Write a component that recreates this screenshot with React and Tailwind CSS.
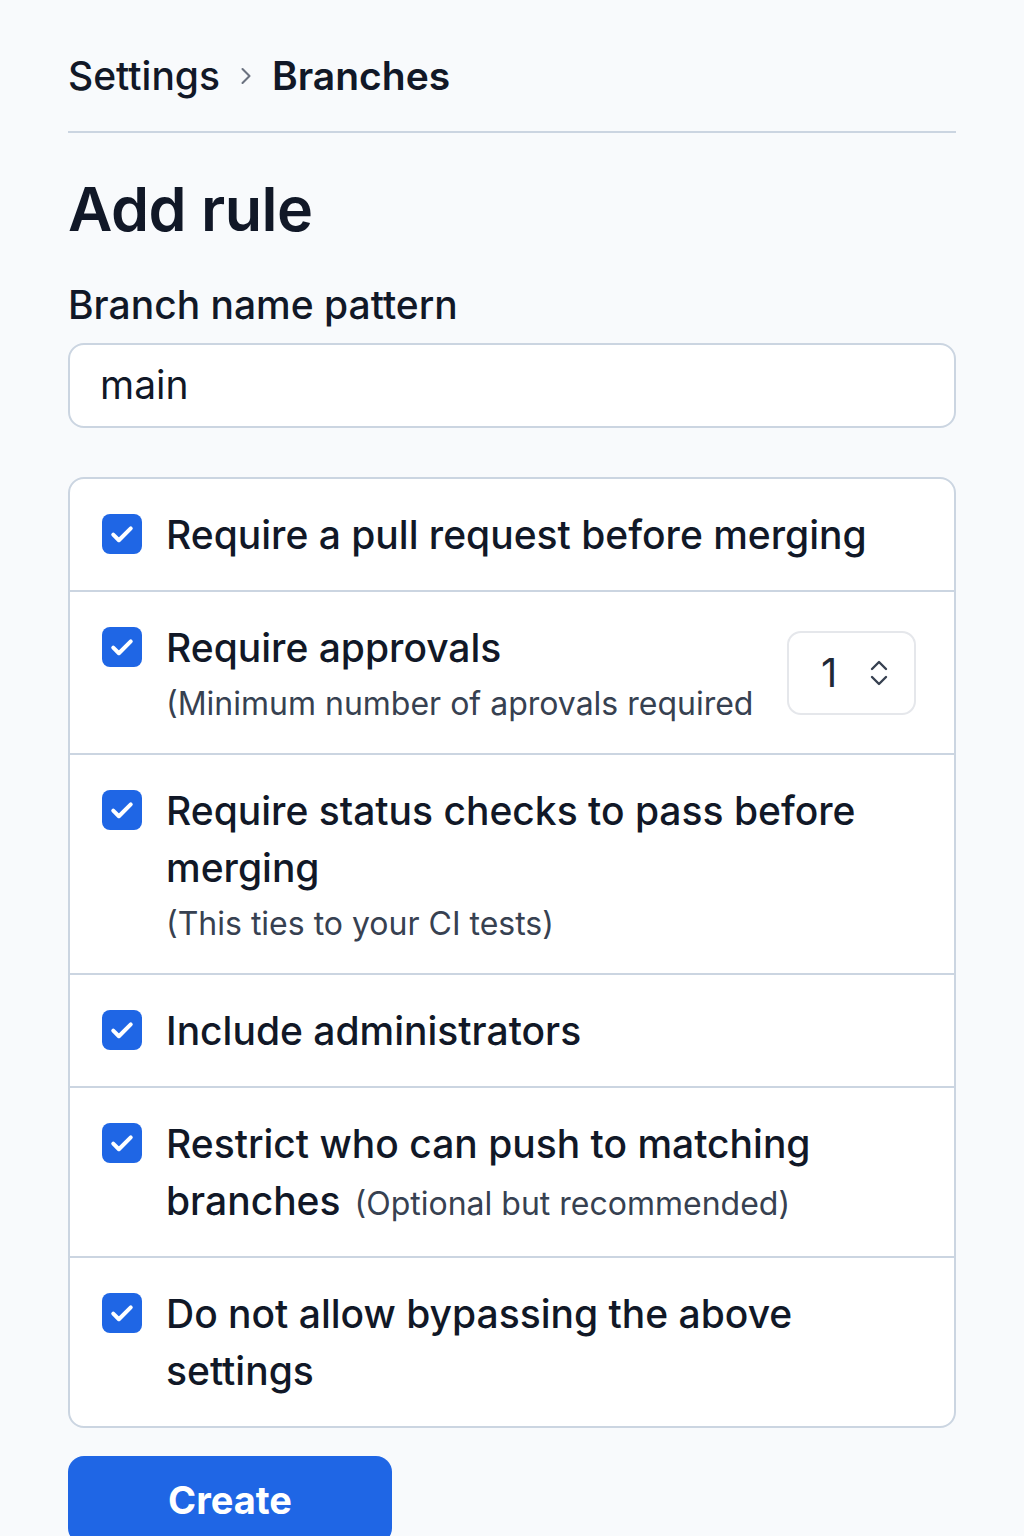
import React from 'react';
import { ChevronRight } from 'lucide-react';

// blue checked box
const Check = () => (
  <span className="mt-[8px] flex h-[40px] w-[40px] shrink-0 items-center justify-center rounded-[8px] bg-[#1f66e5]">
    <svg width="30" height="30" viewBox="0 0 24 24" fill="none" stroke="white" strokeWidth="3.2" strokeLinecap="round" strokeLinejoin="round">
      <path d="M5 12.5l4.5 4.5L19 7.5" />
    </svg>
  </span>
);

const rules = [
  { title: 'Require a pull request before merging' },
  { title: 'Require approvals', note: '(Minimum number of aprovals required', count: 1 },
  { title: 'Require status checks to pass before merging', note: '(This ties to your CI tests)' },
  { title: 'Include administrators' },
  { title: 'Restrict who can push to matching branches', inlineNote: '(Optional but recommended)' },
  { title: 'Do not allow bypassing the above settings' },
];

const RuleRow = ({ rule }) => (
  <div className="flex items-center gap-6 py-[27px] pl-[32px] pr-[38px]">
    <div className="flex flex-1 items-start gap-6">
      <Check />
      <div className="flex-1">
        <p className="text-[39px] font-medium leading-[57px] text-[#111827]">
          {rule.title}
          {rule.inlineNote && (
            <span className="ml-[14px] text-[32px] font-normal leading-none text-[#374151]">{rule.inlineNote}</span>
          )}
        </p>
        {rule.note && (
          <p className="mt-[6px] text-[32px] leading-[44px] text-[#374151]">{rule.note}</p>
        )}
      </div>
    </div>
    {rule.count !== undefined && (
      <div className="flex h-[84px] w-[129px] shrink-0 items-center justify-between rounded-[14px] border-2 border-[#e5e7eb] bg-white pl-[32px] pr-[22px]">
        <span className="text-[40px] text-[#1f2937]">{rule.count}</span>
        <svg width="26" height="32" viewBox="0 0 26 32" fill="none" stroke="#374151" strokeWidth="2.4" strokeLinecap="round" strokeLinejoin="round">
          <path d="M6 12l7-7 7 7" />
          <path d="M6 20l7 7 7-7" />
        </svg>
      </div>
    )}
  </div>
);

export default function App() {
  return (
    <div className="min-h-screen bg-[#f8fafc] px-[68px] pt-[50px] font-['Inter',sans-serif] text-[#111827]">
      <nav className="flex items-center gap-[12px] pb-[29px] text-[39px] font-medium leading-[52px]">
        <span>Settings</span>
        <ChevronRight size={28} strokeWidth={1.8} className="text-[#6b7280]" />
        <span className="font-semibold">Branches</span>
      </nav>
      <div className="border-t-2 border-[#cbd5e1]" />

      <h1 className="mt-[36px] text-[61px] font-semibold leading-[80px] tracking-[-0.5px]">Add rule</h1>

      <label className="mt-[30px] block text-[39px] font-medium leading-[52px]">Branch name pattern</label>
      <div className="mt-[12px] flex h-[85px] items-center rounded-[16px] border-2 border-[#cbd5e1] bg-white px-[30px] text-[39px]">
        main
      </div>

      <div className="mt-[49px] divide-y-2 divide-[#cbd5e1] rounded-[16px] border-2 border-[#cbd5e1] bg-white">
        {rules.map((rule) => (
          <RuleRow key={rule.title} rule={rule} />
        ))}
      </div>

      <button className="mt-[28px] flex h-[88px] w-[324px] items-center justify-center rounded-[16px] bg-[#1f66e5] text-[38px] font-bold text-white">
        Create
      </button>
    </div>
  );
}
